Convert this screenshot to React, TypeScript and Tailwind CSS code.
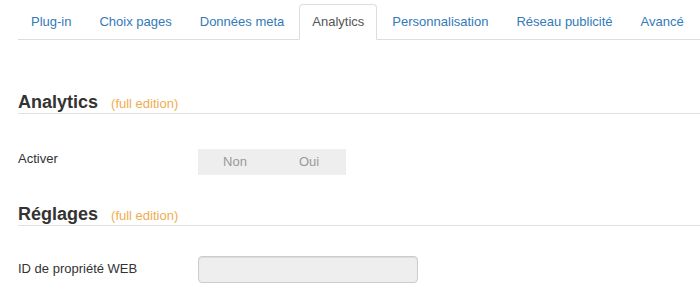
import React from "react";

const tabs = [
  "Plug-in",
  "Choix pages",
  "Données meta",
  "Analytics",
  "Personnalisation",
  "Réseau publicité",
  "Avancé",
];

function SectionTitle({ title }: { title: string }) {
  return (
    <h3 className="border-b border-[#e0e0e0] pb-[1px] text-[18px] font-bold leading-[20px] text-[#333]">
      {title}
      <span className="ml-[13px] align-baseline text-[13px] font-normal leading-none text-[#f0ad4e]">
        (full edition)
      </span>
    </h3>
  );
}

export default function App() {
  return (
    <div className="min-h-[300px] bg-white pl-[18px] pt-[4px] font-['Liberation_Sans',Arial,sans-serif] text-[13px] text-[#333]">
      {/* tabs */}
      <ul className="flex border-b border-[#ddd]">
        {tabs.map((t) => {
          const active = t === "Analytics";
          return (
            <li key={t} className="-mb-px mr-[2px]">
              <a
                href="#"
                className={
                  active
                    ? "block rounded-t-[4px] border border-[#ddd] border-b-white bg-white px-[12px] py-[8px] leading-[18px] text-[#555]"
                    : "block rounded-t-[4px] border border-transparent px-[12px] py-[8px] leading-[18px] text-[#337ab7]"
                }
              >
                {t}
              </a>
            </li>
          );
        })}
      </ul>

      {/* Analytics */}
      <div className="mt-[52px]">
        <SectionTitle title="Analytics" />
      </div>
      <div className="mt-[35px] flex items-start">
        <label className="w-[180px] leading-[19px]">Activer</label>
        <div className="flex h-[26px] w-[148px] bg-[#eee] text-[#999]">
          <span className="flex flex-1 items-center justify-center">Non</span>
          <span className="flex flex-1 items-center justify-center">Oui</span>
        </div>
      </div>

      {/* Réglages */}
      <div className="mt-[29px]">
        <SectionTitle title="Réglages" />
      </div>
      <div className="mt-[30px] flex items-start">
        <label className="w-[180px] pt-[3px] leading-[19px]">ID de propriété WEB</label>
        <input
          disabled
          className="h-[27px] w-[220px] rounded-[4px] border border-[#ccc] bg-[#eee] shadow-[inset_0_1px_1px_rgba(0,0,0,0.075)]"
        />
      </div>
    </div>
  );
}
